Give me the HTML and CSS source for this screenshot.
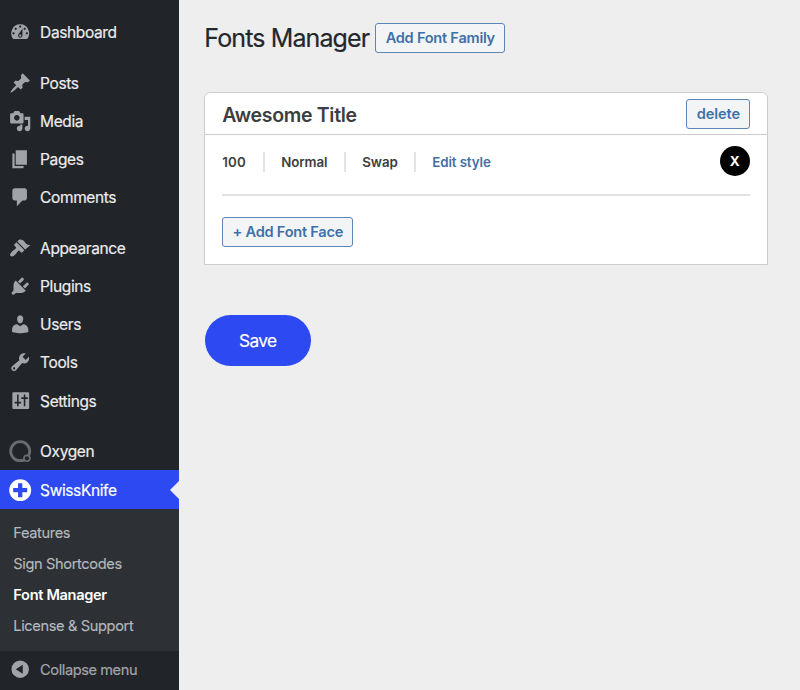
FILE: index.html
```html
<!DOCTYPE html>
<html lang="en">
<head>
<meta charset="utf-8">
<title>Fonts Manager</title>
<link rel="stylesheet" href="styles.css">
</head>
<body>
<div class="layout">
<nav class="sidebar">
<ul class="menu">
<li class="item"><svg class="icon" viewBox="0 0 20 20"><path d="M3.76 16h12.48A7.998 7.998 0 0 0 10 3a7.998 7.998 0 0 0-6.24 13zM10 4c.55 0 1 .45 1 1s-.45 1-1 1-1-.45-1-1 .45-1 1-1zM6 6c.55 0 1 .45 1 1s-.45 1-1 1-1-.45-1-1 .45-1 1-1zm8 0c.55 0 1 .45 1 1s-.45 1-1 1-1-.45-1-1 .45-1 1-1zm-5.37 5.55L12 7v6c0 1.1-.9 2-2 2s-2-.9-2-2c0-.57.24-1.08.63-1.45zM4 10c.55 0 1 .45 1 1s-.45 1-1 1-1-.45-1-1 .45-1 1-1zm12 0c.55 0 1 .45 1 1s-.45 1-1 1-1-.45-1-1 .45-1 1-1zm-5 3c0-.55-.45-1-1-1s-1 .45-1 1 .45 1 1 1 1-.45 1-1z"/></svg><span class="label">Dashboard</span></li>
<li class="separator"></li>
<li class="item"><svg class="icon" viewBox="0 0 20 20"><path d="M10.44 3.02l1.82-1.82 6.36 6.35-1.83 1.82c-1.05-.68-2.48-.57-3.41.36l-.75.75c-.92.93-1.04 2.35-.35 3.41l-1.83 1.82-2.41-2.41-2.8 2.79c-.42.42-3.38 2.71-3.8 2.29s1.86-3.39 2.28-3.81l2.79-2.79L4.1 9.36l1.83-1.82c1.05.69 2.48.57 3.4-.36l.75-.75c.93-.92 1.05-2.35.36-3.41z"/></svg><span class="label">Posts</span></li>
<li class="item"><svg class="icon" viewBox="0 0 20 20"><path fill-rule="evenodd" d="M13 11V4c0-.55-.45-1-1-1h-1.67L9 1H5L3.67 3H2c-.55 0-1 .45-1 1v7c0 .55.45 1 1 1h10c.55 0 1-.45 1-1zM7 4.5c1.38 0 2.5 1.12 2.5 2.5S8.38 9.5 7 9.5 4.5 8.38 4.5 7 5.62 4.5 7 4.5zM14 6h5v10.5c0 1.38-1.12 2.5-2.5 2.5S14 17.88 14 16.5s1.12-2.5 2.5-2.5c.17 0 .34.02.5.05V9h-3V6zm-4 8.05V13h2v3.5c0 1.38-1.12 2.5-2.5 2.5S7 17.88 7 16.5 8.12 14 9.5 14c.17 0 .34.02.5.05z"/></svg><span class="label">Media</span></li>
<li class="item"><svg class="icon" viewBox="0 0 20 20"><path d="M6 15V2h10v13H6zm-1 1h8v2H3V5h2v11z"/></svg><span class="label">Pages</span></li>
<li class="item"><svg class="icon" viewBox="0 0 20 20"><path d="M5 2h9c1.1 0 2 .9 2 2v7c0 1.1-.9 2-2 2h-2l-5 5v-5H5c-1.1 0-2-.9-2-2V4c0-1.1.9-2 2-2z"/></svg><span class="label">Comments</span></li>
<li class="separator"></li>
<li class="item"><svg class="icon" viewBox="0 0 20 20"><path d="M14.48 11.06L7.41 3.99l1.5-1.5c.5-.56 2.3-.47 3.51.32 1.21.8 1.43 1.28 2 2.1 1.07 1.59 2.36 2.64 4.8 2.14zm-.71.71L6.7 4.7 4.93 6.47c-.39.39-.39 1.02 0 1.41l1.06 1.06c.39.39.39 1.03 0 1.42-.6.6-1.43 1.11-2.21 1.69-.35.26-.7.53-1.01.84C1.43 14.23.4 16.08 1.4 17.07c.99 1 2.84-.03 4.18-1.36.31-.31.58-.66.85-1.02.57-.78 1.08-1.61 1.69-2.21.39-.39 1.02-.39 1.41 0l1.06 1.06c.39.39 1.02.39 1.41 0z"/></svg><span class="label">Appearance</span></li>
<li class="item"><svg class="icon" viewBox="0 0 20 20"><path d="M13.11 4.36L9.87 7.6 8 5.73l3.24-3.24c.35-.34 1.05-.2 1.56.32.52.51.66 1.21.31 1.55zm-8 1.77l.91-1.12 9.01 9.01-1.19.84c-.71.71-2.63 1.16-3.82 1.16H6.14L4.9 17.26c-.59.59-1.54.59-2.12 0-.59-.58-.59-1.53 0-2.12l1.24-1.24v-3.88c0-1.13.4-3.19 1.09-3.89zm7.26 3.97l3.24-3.24c.34-.35 1.04-.21 1.55.31.52.51.66 1.21.31 1.55l-3.24 3.25z"/></svg><span class="label">Plugins</span></li>
<li class="item"><svg class="icon" viewBox="0 0 20 20"><path d="M10 9.25c-2.27 0-2.73-3.44-2.73-3.44C7 4.02 7.82 2 9.97 2c2.16 0 2.98 2.02 2.71 3.81 0 0-.41 3.44-2.68 3.44zm0 2.57L12.72 10c2.39 0 4.52 2.33 4.52 4.53v2.49s-3.65 1.13-7.24 1.13c-3.65 0-7.24-1.13-7.24-1.13v-2.49c0-2.25 1.94-4.48 4.47-4.48z"/></svg><span class="label">Users</span></li>
<li class="item"><svg class="icon" viewBox="0 0 20 20"><path fill-rule="evenodd" d="M16.68 9.77c-1.34 1.34-3.3 1.67-4.95.99l-5.41 6.52c-.99.99-2.59.99-3.58 0s-.99-2.59 0-3.57l6.52-5.42c-.68-1.65-.35-3.61.99-4.95 1.28-1.28 3.12-1.62 4.72-1.06l-2.89 2.89 2.82 2.82 2.86-2.87c.53 1.58.18 3.39-1.08 4.65zM3.81 16.21c.4.39 1.04.39 1.43 0 .4-.4.4-1.04 0-1.43-.39-.4-1.03-.4-1.43 0-.39.39-.39 1.03 0 1.43z"/></svg><span class="label">Tools</span></li>
<li class="item"><svg class="icon" viewBox="0 0 20 20"><path fill-rule="evenodd" d="M4 2h13q1 0 1 1v13q0 1-1 1H4q-1 0-1-1V3q0-1 1-1zM7.2 4v6.5H5V12h2.2v2.5h1.4V12h2.2v-1.5H8.6V4zM13.2 4v2.5H11V8h2.2v6.5h1.4V8h2.2V6.5h-2.2V4z"/></svg><span class="label">Settings</span></li>
<li class="separator"></li>
<li class="item"><svg class="icon oxygen" viewBox="0 0 24 24"><circle cx="12" cy="12" r="10.2"/><circle class="oxygen-dot" cx="19.2" cy="19.6" r="3.2"/></svg><span class="label">Oxygen</span></li>
<li class="item current"><svg class="icon" viewBox="0 0 24 24"><path fill-rule="evenodd" d="M12 .2a11.8 11.8 0 1 0 0 23.6A11.8 11.8 0 0 0 12 .2zM9.7 4.5h4.6v5.2h5.2v4.6h-5.2v5.2H9.7v-5.2H4.5V9.7h5.2z"/></svg><span class="label">SwissKnife</span></li>
</ul>
<ul class="submenu">
<li>Features</li>
<li>Sign Shortcodes</li>
<li class="active">Font Manager</li>
<li>License &amp; Support</li>
</ul>
<div class="item collapse"><svg class="icon" viewBox="0 0 20 20"><path fill-rule="evenodd" d="M10 2.2a7.8 7.8 0 1 0 0 15.6 7.8 7.8 0 0 0 0-15.6zM12.3 6v8L6 10z"/></svg><span class="label">Collapse menu</span></div>
</nav>
<main class="content">
<header class="heading"><h1>Fonts Manager</h1><button class="button add-family">Add Font Family</button></header>
<section class="card">
<header class="card-head"><h2>Awesome Title</h2><button class="button delete">delete</button></header>
<div class="card-body">
<div class="face"><span class="cell weight">100</span><span class="cell normal">Normal</span><span class="cell swap">Swap</span><a class="cell edit">Edit style</a><button class="remove">X</button></div>
<button class="button add-face">+ Add Font Face</button>
</div>
</section>
<button class="save">Save</button>
</main>
</div>
</body>
</html>
```
FILE: styles.css
```css
* { box-sizing: border-box; }
body { margin: 0; background: #eee; font-family: Inter, "Liberation Sans", sans-serif; }
ul { margin: 0; padding: 0; list-style: none; }
h1, h2 { margin: 0; }
button { font-family: inherit; padding: 0; margin: 0; }
.layout { display: flex; height: 690px; overflow: hidden; }
.sidebar { width: 179.3px; flex: none; background: #212429; color: #ececed; }
.menu { padding-top: 13.5px; }
.separator { height: 12.3px; }
.item { position: relative; display: flex; align-items: center; height: 38.2px; padding-left: 9.2px; font-size: 15.5px; }
.icon { width: 22.4px; height: 22.4px; flex: none; margin-right: 8.5px; fill: #a0a4a9; }
.label { padding-top: 0.6px; white-space: nowrap; letter-spacing: -0.38px; -webkit-text-stroke: 0.2px currentColor; }
.icon.oxygen { fill: none; stroke: #696c71; stroke-width: 3; overflow: visible; }
.icon .oxygen-dot { fill: #212429; stroke-width: 1.8; }
.current { height: 38.8px; background: #2d49f2; color: #fff; }
.current .icon { fill: #fff; }
.current::after { content: ""; position: absolute; right: 0; top: 10.5px; border: 9px solid transparent; border-right-color: #eee; border-left: 0; }
.submenu { height: 142px; padding: 8.7px 0 0 13.3px; background: #2d3136; font-size: 14.6px; color: #b5b8bc; letter-spacing: -0.36px; -webkit-text-stroke: 0.15px currentColor; }
.submenu li { height: 31.1px; line-height: 31.1px; white-space: nowrap; }
.submenu .active { color: #fff; font-weight: 600; letter-spacing: -0.33px; -webkit-text-stroke: 0; }
.collapse { height: 36px; color: #a1a4a9; font-size: 14.6px; }
.collapse .label { letter-spacing: -0.42px; }
.content { flex: 1; padding: 23px 32px 0 25px; }
.heading { display: flex; gap: 6px; height: 69px; }
h1 { width: 165px; font-size: 25px; line-height: 31px; font-weight: 400; color: #23272c; white-space: nowrap; letter-spacing: -0.88px; -webkit-text-stroke: 0.2px currentColor; }
.button { height: 30px; border: 1px solid #5c86b5; border-radius: 3px; background: #f3f4f6; color: #3f70a6; font-size: 14.6px; font-weight: 600; letter-spacing: -0.26px; white-space: nowrap; }
.add-family { width: 130px; }
.card { height: 173px; border: 1px solid #ccc; border-radius: 6px 6px 0 0; background: #fff; }
.card-head { display: flex; align-items: center; justify-content: space-between; height: 42px; padding: 0 17px; border-bottom: 1px solid #ccc; }
h2 { font-size: 19.5px; font-weight: 600; line-height: 24px; color: #3c3e40; margin-top: 3px; letter-spacing: -0.32px; }
.delete { width: 64px; margin-right: -0.4px; letter-spacing: -0.1px; }
.card-body { padding: 0 17px; }
.face { display: flex; align-items: center; height: 61px; border-bottom: 2px solid #e2e2e2; padding-bottom: 6px; margin-bottom: 21px; font-size: 13.3px; font-weight: 600; color: #3c3e40; }
.cell { height: 20px; line-height: 20px; border-right: 2px solid #e2e2e2; margin-right: 16px; white-space: nowrap; letter-spacing: -0.1px; }
.weight { width: 43px; letter-spacing: 0.1px; }
.normal { width: 65px; }
.swap { width: 54px; }
.edit { border: 0; color: #3f70a6; }
.remove { width: 30.5px; height: 30.5px; margin-left: auto; margin-top: -1px; border: 0; border-radius: 50%; background: #000; color: #fff; font-size: 13.5px; font-weight: 700; }
.add-face { width: 131px; }
.save { display: block; width: 106px; height: 51px; margin: 50px 0 0 0.5px; border: 0; border-radius: 26px; background: #2d49f2; color: #fff; font-size: 17.3px; letter-spacing: -0.6px; -webkit-text-stroke: 0.2px currentColor; }
```
